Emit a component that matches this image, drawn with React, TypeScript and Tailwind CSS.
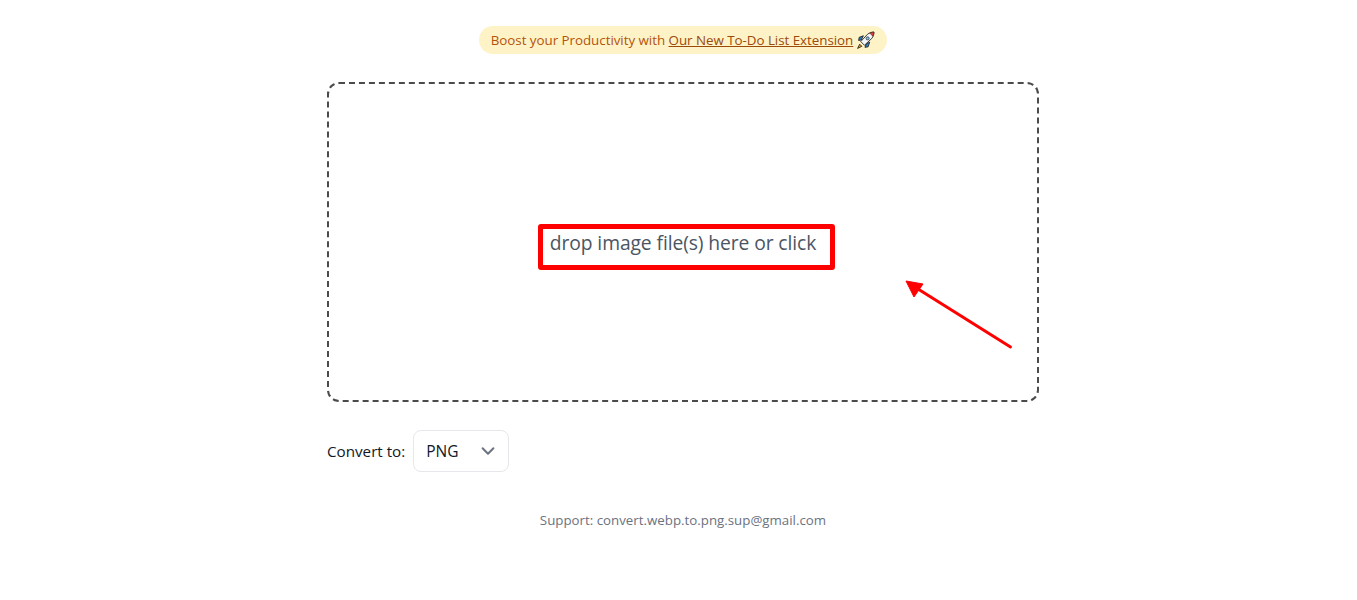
import React from "react";

function Rocket() {
  return (
    <svg width="19" height="19" viewBox="0 0 18 18" className="ml-[3px] shrink-0">
      <path d="M3.5 12.5 L1.5 16.5 L5.5 14.5 Z" fill="#f59e0b" stroke="#1f1f1f" strokeWidth="0.8" />
      <path d="M7 4.5 L3 6 L2.5 9 L5 8.5 Z" fill="#2f7fc1" stroke="#1f1f1f" strokeWidth="0.8" />
      <path d="M13 10.5 L11.5 15 L8.5 15.5 L9.5 12.5 Z" fill="#2f7fc1" stroke="#1f1f1f" strokeWidth="0.8" />
      <path d="M4.5 10 L11 3 C13 1.5 15 1 17 1 C17 3 16.5 5 15 7 L8 13.5 Z" fill="#f3f6fa" stroke="#1f1f1f" strokeWidth="0.8" />
      <path d="M13 2 C14.5 1.2 15.8 1 17 1 C17 2.2 16.8 3.5 16 5 Z" fill="#e5383b" stroke="#1f1f1f" strokeWidth="0.5" />
      <circle cx="11" cy="7" r="1.5" fill="#7cc0ee" stroke="#1f1f1f" strokeWidth="0.6" />
    </svg>
  );
}

export default function App() {
  const font = "font-['Open_Sans','Noto_Sans',sans-serif]";
  return (
    <div className={`${font} h-[600px] bg-white pl-[327px]`}>
      <div className="flex w-[712px] flex-col">
        <div className="flex justify-center pt-[26px]">
          <div className="flex h-[28px] w-[408px] items-center justify-center rounded-full bg-[#fef3c7] pt-[1px] text-[13.36px] tracking-[-0.03px] text-[#b45309]">
            <span>Boost your Productivity with&nbsp;</span>
            <a className="text-[#9a4a0a] underline">Our New To-Do List Extension</a>
            <Rocket />
          </div>
        </div>

        <div className="relative mt-[28px] flex h-[320px] items-center justify-center rounded-[12px] border-2 border-dashed border-[#4b4b4b]">
          <p className="relative top-[1px] text-[19.3px] tracking-[-0.1px] text-[#4b5563]">drop image file(s) here or click</p>
          <div className="absolute left-[209px] top-[140px] h-[46px] w-[297px] rounded-[3px] border-[5px] border-[#ff0000]" />
          <svg className="absolute left-[570px] top-[190px]" width="120" height="90" viewBox="0 0 120 90">
            <line x1="111.5" y1="73" x2="19" y2="15" stroke="#ff0000" strokeWidth="3" strokeLinecap="round" />
            <path d="M7 7 L24 10 L15 23 Z" fill="#ff0000" stroke="#ff0000" strokeWidth="1" />
          </svg>
        </div>

        <div className="mt-[28px] flex items-center gap-[8px]">
          <span className="text-[15.2px] text-[#111827]">Convert to:</span>
          <div className="flex h-[42px] w-[96px] items-center justify-between rounded-[8px] border border-[#e5e7eb] bg-white pl-[12px] pr-[11px]">
            <span className="pt-[1px] text-[15.5px] text-[#111827]">PNG</span>
            <svg width="18" height="18" viewBox="0 0 20 20" fill="none" stroke="#6b7280" strokeWidth="2.2" strokeLinecap="round" strokeLinejoin="round">
              <path d="M4 7 L10 13 L16 7" />
            </svg>
          </div>
        </div>

        <p className="mt-[39px] text-center text-[13.3px] text-[#6b7280]">Support: convert.webp.to.png.sup@gmail.com</p>
      </div>
    </div>
  );
}
